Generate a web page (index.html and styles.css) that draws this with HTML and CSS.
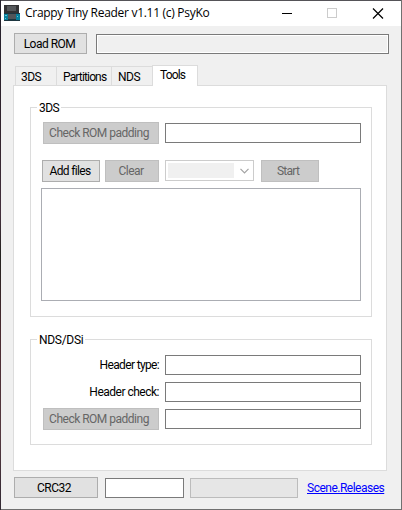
FILE: index.html
```html
<!DOCTYPE html>
<html lang="en">
<head>
<meta charset="utf-8">
<title>Crappy Tiny Reader</title>
<link rel="stylesheet" href="styles.css">
</head>
<body>
<div class="window">
  <header class="titlebar">
    <svg class="app-icon" width="16" height="16" viewBox="0 0 16 16" shape-rendering="crispEdges">
      <path fill="#323234" d="M0 0h15v8H0z"/>
      <path fill="#55585b" d="M3 1h9v5H3z"/>
      <path fill="#1d3640" d="M0 8h16v8H0z"/>
      <path fill="#087f9b" d="M0 9h4v6H0zM12 9h4v6h-4z"/>
      <path fill="#525559" d="M4 9h8v5H4z"/>
      <path fill="#5ec4d7" d="M1 10h2v1H1zM13 11h1v1h-1zM1 13h1v1H1z"/>
    </svg>
    <span class="title">Crappy Tiny Reader v1.11 (c) PsyKo</span>
    <svg class="controls" width="102" height="11" viewBox="0 0 102 11" fill="none" shape-rendering="crispEdges">
      <path stroke="#000" d="M0 5.5h10"/>
      <path stroke="#ccc" d="M45.5.5h9v9h-9z"/>
      <path stroke="#000" stroke-width="1.2" shape-rendering="auto" d="M91 .5l10 10M101 .5l-10 10"/>
    </svg>
  </header>
  <div class="toolbar">
    <button class="btn load"><span>Load ROM</span></button>
    <div class="field path"></div>
  </div>
  <nav class="tabs">
    <div class="tab t-3ds">3DS</div>
    <div class="tab t-part">Partitions</div>
    <div class="tab t-nds">NDS</div>
    <div class="tab active">Tools</div>
  </nav>
  <main class="panel">
    <section class="group g-3ds">
      <h2 class="legend">3DS</h2>
      <div class="row">
        <button class="btn off check"><span>Check ROM padding</span></button>
        <div class="field"></div>
      </div>
      <div class="row actions">
        <button class="btn add"><span>Add files</span></button>
        <button class="btn off clear"><span>Clear</span></button>
        <div class="combo">
          <div class="combo-value"></div>
          <svg width="9" height="6" viewBox="0 0 9 6" fill="none"><path stroke="#a3a3a3" stroke-width="1.2" d="M.5 .8l4 4 4-4"/></svg>
        </div>
        <button class="btn off start"><span>Start</span></button>
      </div>
      <div class="list"></div>
    </section>
    <section class="group g-nds">
      <h2 class="legend wide">NDS/DSi</h2>
      <div class="row"><div class="label type">Header type:</div><div class="field"></div></div>
      <div class="row"><div class="label hcheck">Header check:</div><div class="field"></div></div>
      <div class="row"><button class="btn off check"><span>Check ROM padding</span></button><div class="field"></div></div>
    </section>
  </main>
  <footer class="footer">
    <button class="btn crc"><span>CRC32</span></button>
    <div class="field hash"></div>
    <div class="progress"></div>
    <a class="link">Scene.Releases</a>
  </footer>
</div>
</body>
</html>
```
FILE: styles.css
```css
* { box-sizing: border-box; }
body { margin: 0; }
.window {
  width: 402px;
  height: 510px;
  border: 1px solid #707070;
  border-image: linear-gradient(#24212c 0, #30222b 25%, #432f3c 42%, #23211e 50%, #4a2a30 65%, #553940 85%, #302832) 1;
  border-right: 0;
  border-top: 0;
  border-bottom: 0;
  box-shadow: inset -1px 0 #707070, inset 0 1px #555358, inset 0 -1px #707070;
  background: #f0f0f0;
  color: #000;
  font: 12px/14px Roboto, "Liberation Sans", sans-serif;
  letter-spacing: -0.5px;
  padding: 1px 1px 1px 0;
}
.titlebar {
  display: flex;
  height: 25px;
  padding-left: 3px;
  background: #fff;
}
.app-icon { flex: none; margin-top: 4px; }
.title {
  flex: none;
  width: 262px;
  padding: 4px 0 0 5px;
  font: 12px/16px "Open Sans", "Noto Sans", sans-serif;
  letter-spacing: -0.29px;
  white-space: nowrap;
}
.controls { flex: none; margin-top: 7px; }
.toolbar { display: flex; gap: 9px; padding: 7px 0 0 13px; }
.btn {
  display: flex;
  justify-content: center;
  align-items: center;
  flex: none;
  height: 22px;
  padding: 0 2px 0 0;
  border: 1px solid #adadad;
  border-radius: 0;
  background: #e1e1e1;
  color: #000;
  font: inherit;
  letter-spacing: inherit;
  white-space: nowrap;
}
.off { border-color: #bfbfbf; background: #ccc; color: #666; }
.load { width: 73px; height: 21px; letter-spacing: -0.5px; }
.field { flex: none; width: 196px; height: 20px; border: 1px solid #7a7a7a; background: #fff; }
.path { width: 293px; margin-top: 1px; background: #f0f0f0; box-shadow: inset 0 0 0 1px #fff; }
.tabs { display: flex; align-items: flex-end; height: 21px; margin: 11px 0 -1px 14px; position: relative; }
.tab {
  height: 19px;
  margin-bottom: 1px;
  padding: 3px 0 0 6px;
  border: 1px solid #dcdcdc;
  border-right: 0;
  border-bottom: 0;
  white-space: nowrap;
}
.t-3ds { width: 41px; padding-left: 5px; }
.t-part { width: 55px; letter-spacing: -0.85px; }
.t-nds { width: 41px; }
.active {
  width: 46px;
  height: 21px;
  margin-bottom: 0;
  padding: 2px 0 0 7px;
  border-right: 1px solid #dcdcdc;
  background: #fff;
  letter-spacing: -0.85px;
}
.panel {
  width: 374px;
  height: 386px;
  margin-left: 12px;
  padding: 21px 0 0 16px;
  border: 1px solid #dcdcdc;
  background: #fff;
}
.group { width: 342px; border: 1px solid #dcdcdc; padding-left: 10px; }
.g-3ds { height: 210px; }
.g-nds { height: 106px; margin-top: 22px; }
.legend {
  width: max-content;
  height: 14px;
  margin: -7px 0 0 -4px;
  padding: 0 2px;
  background: #fff;
  font: inherit;
}
.wide { letter-spacing: -0.3px; }
.row { display: flex; align-items: center; }
.g-3ds .row { height: 22px; margin: 7px 0 0 2px; }
.check { width: 116px; margin-right: 6px; padding-right: 4px; }
.g-3ds .actions { margin: 16px 0 0 1px; }
.add { width: 58px; letter-spacing: -0.65px; }
.clear { width: 54px; margin: 0 6px 0 5px; }
.combo {
  display: flex;
  align-items: center;
  width: 89px;
  height: 21px;
  margin: 0 7px 1px 0;
  padding: 0 4px 0 2px;
  justify-content: space-between;
  border: 1px solid #ccc;
}
.combo-value { width: 66px; height: 15px; background: #f0f0f0; }
.start { width: 58px; padding-right: 4px; letter-spacing: -0.75px; }
.list { width: 320px; height: 113px; margin-top: 6px; border: 1px solid #abadb3; }
.g-nds .row { height: 22px; margin: 0 0 5px 2px; }
.g-nds .legend + .row { margin-top: 7px; }
.label { width: 116px; margin-right: 6px; text-align: right; white-space: nowrap; }
.type { letter-spacing: -0.65px; }
.footer { display: flex; align-items: center; height: 21px; margin: 6px 0 0 13px; }
.crc { width: 84px; height: 21px; padding-right: 4px; }
.hash { width: 79px; margin: 1px 6px 0 7px; }
.progress { width: 108px; height: 20px; margin: 1px 9px 0 0; border: 1px solid #bcbcbc; background: #e6e6e6; }
.link { color: #00f; text-decoration: underline; }
```
